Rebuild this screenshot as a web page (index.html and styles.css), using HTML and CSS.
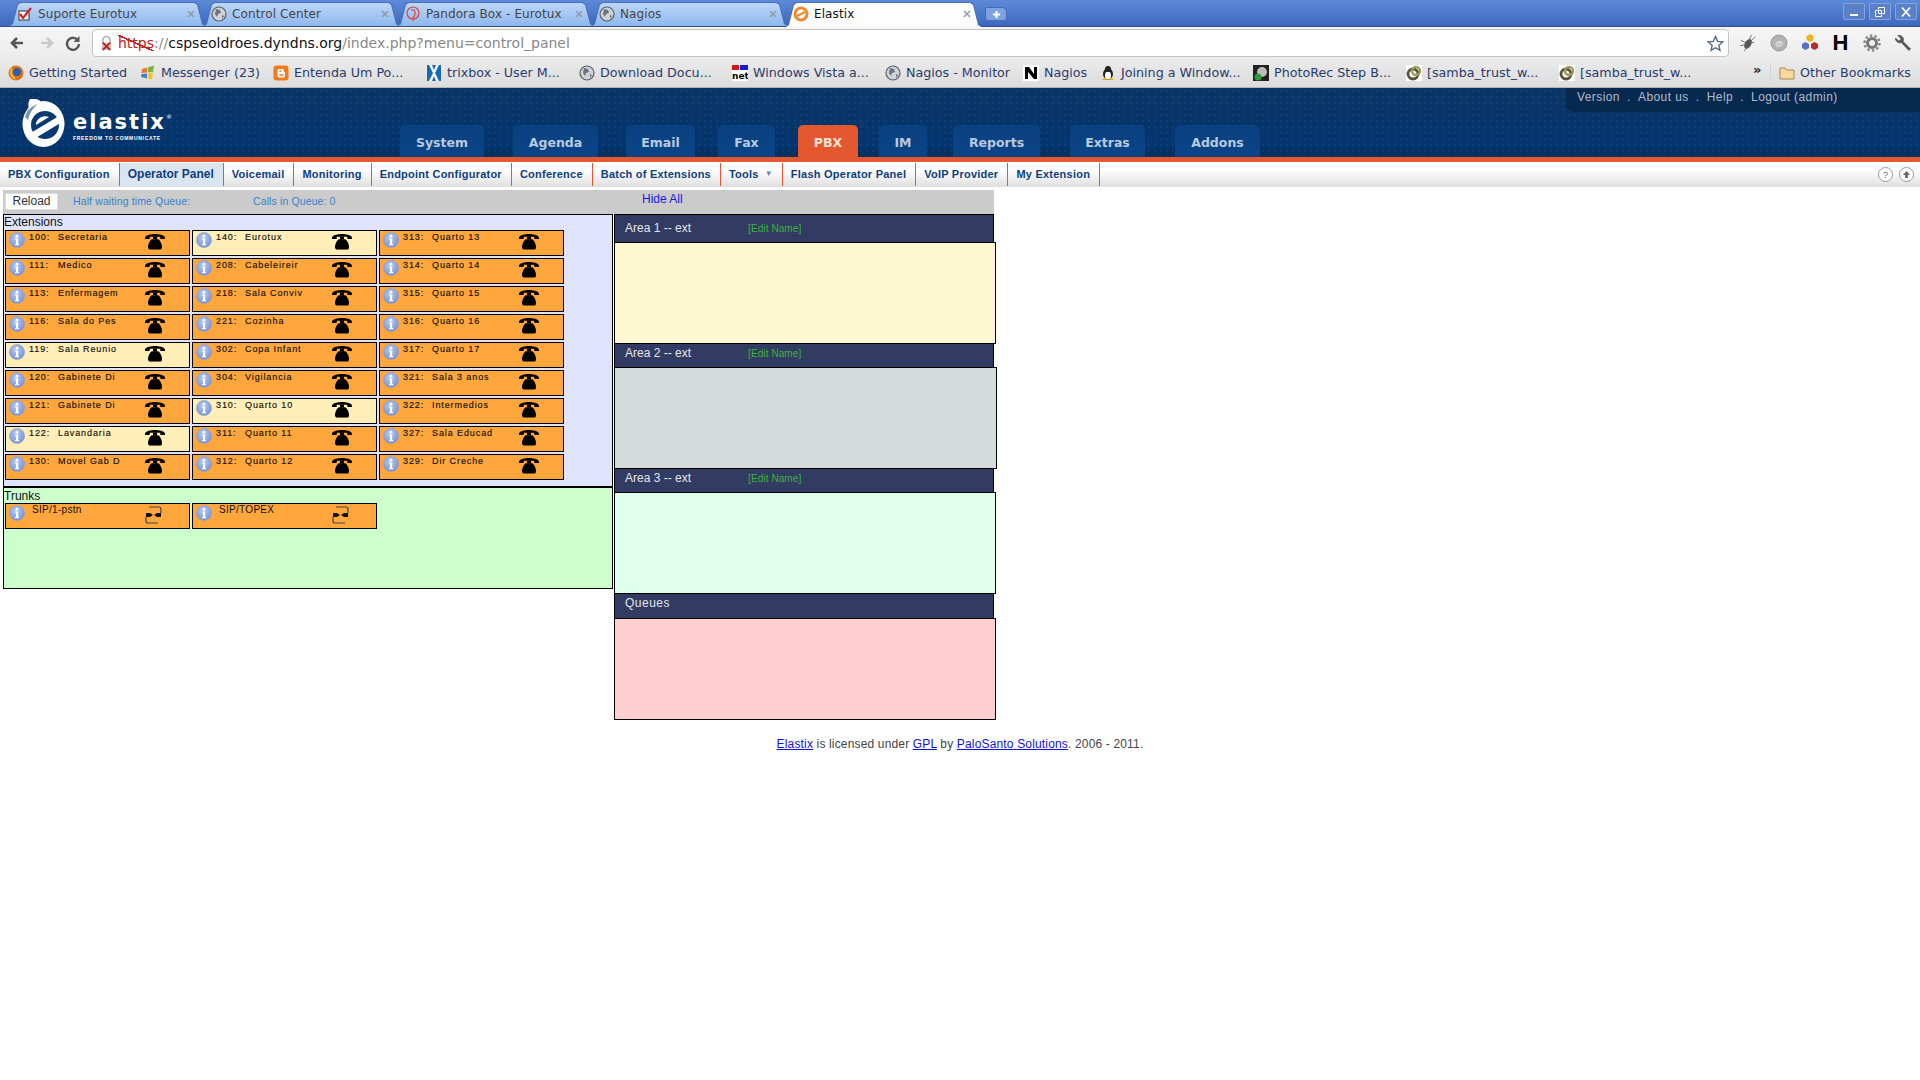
FILE: index.html
```html
<!DOCTYPE html>
<html lang="en">
<head>
    <meta charset="UTF-8">
    <title>Elastix</title>
    <link rel="stylesheet" href="styles.css">
</head>
<body>
    <!-- shared icons -->
    <svg class="sprite" xmlns="http://www.w3.org/2000/svg">
        <defs>
            <radialGradient id="info-fill" cx="45%" cy="35%" r="70%">
                <stop offset="0" stop-color="#b8c9f0"/>
                <stop offset="1" stop-color="#6f8fd6"/>
            </radialGradient>
            <symbol id="i-info" viewBox="0 0 16 16">
                <circle cx="8" cy="8" r="7.6" fill="url(#info-fill)" stroke="#8a9fd0" stroke-width=".6"/>
                <circle cx="8" cy="4.2" r="1.4" fill="#fff"/>
                <path d="M6.2 6.6h3v5.4h1v1.2H6v-1.2h1V7.8h-.8z" fill="#fff"/>
            </symbol>
            <symbol id="i-phone" viewBox="0 0 20 16">
                <path d="M0 3.4C1 1 6 0 10 0s9 1 10 3.400V5h-4.400L15 2.800H5L4.400 5H0z" fill="#000"/>
                <path d="M8 2.500h4v3H8z" fill="#000"/>
                <path d="M6.800 5.200h6.400c2 1.200 3.800 4.800 3.800 8 0 1.600-1 2.200-2.400 2.200H5.400c-1.400 0-2.400-.6-2.400-2.200 0-3.200 1.800-6.800 3.800-8z" fill="#000"/>
                <path d="M4 15.700h13" stroke="#6b5a30" stroke-width=".6"/>
            </symbol>
            <symbol id="i-trunk" viewBox="0 0 17 18">
                <path d="M4 1H14Q16 1 16 3V7M13 17H3Q1 17 1 15V11" fill="none" stroke="#444" stroke-width="1.200"/>
                <path d="M1 7H5L8 9 5 11H1zM16 7H12L9 9 12 11H16z" fill="#111"/>
            </symbol>
            <symbol id="i-globe" viewBox="0 0 16 16">
                <circle cx="8" cy="8" r="7" fill="#cfd3d8" stroke="#5b6068" stroke-width="1.200"/>
                <path d="M5 3l4 1 1 3-3 1-1 3-2-3zM11 9l2 1-2 3z" fill="#6d737c"/>
            </symbol>
            <symbol id="i-samba" viewBox="0 0 16 16">
                <rect width="16" height="16" fill="#fff"/>
                <circle cx="7" cy="9" r="5" fill="none" stroke="#55543a" stroke-width="2.800"/>
                <circle cx="10" cy="6" r="4" fill="none" stroke="#9c9a5c" stroke-width="2.400"/>
            </symbol>
            <symbol id="i-close" viewBox="0 0 10 10">
                <path d="M2 2l6 6M8 2l-6 6" stroke="#8d97a5" stroke-width="1.400"/>
            </symbol>
        </defs>
    </svg>

    <div class="tabstrip">
        <div class="ctab">
            <svg class="fav" viewBox="0 0 16 16"><rect x="2" y="5" width="10" height="9" fill="#fff" stroke="#333"/><path d="M3 8l3 4 8-10" fill="none" stroke="#d4202a" stroke-width="2.200"/></svg>
            <span class="ctab-title">Suporte Eurotux</span>
            <svg class="ctab-x"><use href="#i-close"/></svg>
        </div>
        <div class="ctab">
            <svg class="fav"><use href="#i-globe"/></svg>
            <span class="ctab-title">Control Center</span>
            <svg class="ctab-x"><use href="#i-close"/></svg>
        </div>
        <div class="ctab">
            <svg class="fav" viewBox="0 0 16 16"><circle cx="8" cy="7" r="6" fill="none" stroke="#d8433f" stroke-width="1.200"/><path d="M6 4q4-1 4 3t-2 4v4" fill="none" stroke="#d8433f" stroke-width="1.200"/></svg>
            <span class="ctab-title">Pandora Box - Eurotux</span>
            <svg class="ctab-x"><use href="#i-close"/></svg>
        </div>
        <div class="ctab">
            <svg class="fav"><use href="#i-globe"/></svg>
            <span class="ctab-title">Nagios</span>
            <svg class="ctab-x"><use href="#i-close"/></svg>
        </div>
        <div class="ctab ctab-active">
            <svg class="fav" viewBox="0 0 16 16"><circle cx="8" cy="8" r="6" fill="none" stroke="#ef8a2c" stroke-width="3"/><path d="M4 10l8-4" stroke="#ef8a2c" stroke-width="2"/></svg>
            <span class="ctab-title">Elastix</span>
            <svg class="ctab-x"><use href="#i-close"/></svg>
        </div>
        <div class="newtab">
            <svg viewBox="0 0 10 10"><path d="M5 1v8M1 5h8" stroke="#fff" stroke-width="2.400"/></svg>
        </div>
        <div class="winbtns">
            <div class="winbtn"><svg viewBox="0 0 12 12"><path d="M2 9h8" stroke="#fff" stroke-width="2"/></svg></div>
            <div class="winbtn"><svg viewBox="0 0 12 12"><path d="M4.500 1.500h6v6h-6zM1.500 4.500h6v6h-6z" fill="#5a80c8" stroke="#fff"/></svg></div>
            <div class="winbtn"><svg viewBox="0 0 12 12"><path d="M2 1.500l8 9M10 1.500l-8 9" stroke="#fff" stroke-width="1.800"/></svg></div>
        </div>
    </div>

    <div class="toolbar">
        <div class="navbtn"><svg viewBox="0 0 16 16"><path d="M14 8H5M8 3L3 8l5 5" fill="none" stroke="#555" stroke-width="2.600"/></svg></div>
        <div class="navbtn"><svg viewBox="0 0 16 16"><path d="M2 8h9M8 3l5 5-5 5" fill="none" stroke="#c8c8c8" stroke-width="2.600"/></svg></div>
        <div class="navbtn navbtn-reload"><svg viewBox="0 0 16 16"><path d="M13 5.500A6 6 0 1 0 14 9" fill="none" stroke="#555" stroke-width="2.400"/><path d="M14.500 1v6h-6z" fill="#555"/></svg></div>
        <div class="addressbar">
            <svg class="lock" viewBox="0 0 14 16"><path d="M3 7V4.500a4 4 0 0 1 8 0V7" fill="none" stroke="#aaa" stroke-width="1.600"/><rect x="2" y="7" width="10" height="8" fill="#c4c4c4"/><path d="M3 7l8 8M11 7l-8 8" stroke="#c8201c" stroke-width="2"/></svg>
            <span class="url"><span class="url-https">https</span><span class="url-path">://</span>cspseoldroes.dyndns.org<span class="url-path">/index.php?menu=control_panel</span></span>
            <svg class="star" viewBox="0 0 16 16"><path d="M8 1.500l2 4.500 4.800.5-3.600 3.200 1 4.800L8 12l-4.200 2.500 1-4.800L1.200 6.500 6 6z" fill="#fff" stroke="#54698a" stroke-width="1.300"/></svg>
        </div>
        <div class="extensions">
            <div class="ext-icon"><svg viewBox="0 0 18 20"><ellipse cx="9" cy="11" rx="3.500" ry="6" fill="#555" transform="rotate(30 9 11)"/><path d="M1 7l6 3M0 13l6-1M5 19l3-5M13 1l-3 6M17 3l-5 5M16 9l-4 1" stroke="#666"/></svg></div>
            <div class="ext-icon"><svg viewBox="0 0 18 18"><circle cx="9" cy="9" r="8" fill="#b4b4b4" stroke="#9a9a9a"/><text x="9" y="12" class="ext-at">@</text></svg></div>
            <div class="ext-icon"><svg viewBox="0 0 18 18"><path d="M9 0l3.500 2v4L9 8 5.500 6V2z" fill="#f0b420"/><path d="M4.500 8L8 10v4l-3.500 2L1 14v-4z" fill="#5870c0"/><path d="M13.500 8L17 10v4l-3.500 2L10 14v-4z" fill="#b82a2a"/></svg></div>
            <div class="ext-icon ext-h">H</div>
            <div class="ext-icon"><svg viewBox="0 0 18 18"><circle cx="9" cy="9" r="4.500" fill="none" stroke="#777" stroke-width="3"/><circle cx="9" cy="9" r="7.500" fill="none" stroke="#888" stroke-width="2.400" stroke-dasharray="2.500 2.200"/></svg></div>
            <div class="ext-icon"><svg viewBox="0 0 18 18"><path d="M16.500 15L9 7.500c1-2.500 0-5.500-3.500-6L4 1.500 7 4.500 6.500 6.500 4.500 7 1.500 4c0 3.500 3 5.500 6 4.500l7.200 7.800z" fill="#555" stroke="#555"/></svg></div>
        </div>
    </div>

    <div class="bookmarks">
        <a class="bm bm-1"><svg class="fav" viewBox="0 0 16 16"><circle cx="8" cy="8" r="7.500" fill="#d9731c"/><circle cx="9" cy="7" r="4" fill="#2f5fa8"/><path d="M4 3q-3 7 3 11" fill="none" stroke="#f2b33c" stroke-width="2"/></svg>Getting Started</a>
        <a class="bm bm-2"><svg class="fav" viewBox="0 0 16 16"><path d="M2 4l5-1.500v5L1.500 8z" fill="#e8782c"/><path d="M8 2.300l6-1.800-1 6.500-5 .5z" fill="#7cb342"/><path d="M1.500 9L7 8.500v5L1 12z" fill="#3f7fd0"/><path d="M8 8.500l5-.5-1 6.500-4-.8z" fill="#f2c230"/></svg>Messenger (23)</a>
        <a class="bm bm-3"><svg class="fav" viewBox="0 0 16 16"><rect x=".5" y=".5" width="15" height="15" rx="3" fill="#f27a1a"/><path d="M5 4h4q2 0 2 2v1h1v4q0 1.500-2 1.500H6q-1.500 0-1.500-1.500V5" fill="#fff"/><path d="M6.500 6h2M6.500 10h4" stroke="#f27a1a" stroke-width="1.400"/></svg>Entenda Um Po...</a>
        <a class="bm bm-4"><svg class="fav" viewBox="0 0 16 16"><rect x="1" width="14" height="16" fill="#1868b8"/><path d="M3 0l4 8-4 8h3l2-5 2 5h3L9 8l4-8h-3L8 5 6 0z" fill="#fff"/></svg>trixbox - User M...</a>
        <a class="bm bm-5"><svg class="fav"><use href="#i-globe"/></svg>Download Docu...</a>
        <a class="bm bm-6"><svg class="fav" viewBox="0 0 16 16"><rect width="16" height="16" fill="#fff"/><path d="M0 0h7v5H0z" fill="#d01818"/><path d="M8 0h8v5H8z" fill="#1818d0"/><text x="0" y="14" class="bm-net">net</text></svg>Windows Vista a...</a>
        <a class="bm bm-7"><svg class="fav"><use href="#i-globe"/></svg>Nagios - Monitor</a>
        <a class="bm bm-8"><svg class="fav" viewBox="0 0 16 16"><rect width="16" height="16" fill="#fff"/><path d="M2 2h4l5 7V2h3v12h-3L5 7v7H2z" fill="#000"/></svg>Nagios</a>
        <a class="bm bm-9"><svg class="fav" viewBox="0 0 16 16"><ellipse cx="8" cy="9" rx="5" ry="6" fill="#222"/><ellipse cx="8" cy="10.500" rx="3" ry="4" fill="#fff"/><circle cx="8" cy="4" r="3" fill="#222"/><path d="M2 15h5l-2-3zM14 15H9l2-3z" fill="#e8b020"/></svg>Joining a Window...</a>
        <a class="bm bm-10"><svg class="fav" viewBox="0 0 16 16"><rect width="16" height="16" fill="#222"/><circle cx="9" cy="7" r="5" fill="#bbb"/><circle cx="5" cy="12" r="3.500" fill="#2c9c3c"/></svg>PhotoRec Step B...</a>
        <a class="bm bm-11"><svg class="fav"><use href="#i-samba"/></svg>[samba_trust_w...</a>
        <a class="bm bm-12"><svg class="fav"><use href="#i-samba"/></svg>[samba_trust_w...</a>
        <span class="bm-more">»</span>
        <a class="bm bm-other"><svg class="fav" viewBox="0 0 16 16"><path d="M1 3h5l1.500 2H15v9H1z" fill="#f8d9a0" stroke="#a88850"/></svg>Other Bookmarks</a>
    </div>

    <header class="site-head">
        <div class="logo">
            <svg class="logo-mark" viewBox="0 0 44 48">
                <ellipse cx="21.500" cy="25" rx="21" ry="23" fill="#fff"/>
                <path d="M3 18C6 8 12 3 19 2c-6 5-11 10-13 19z" fill="#0b3a70" opacity=".55"/>
                <circle cx="23" cy="26" r="14" fill="#0b3a70"/>
                <path d="M7 35L37 17l3 6-28 17z" fill="#fff"/>
                <path d="M14 24c2-6 8-8 13-6l-13 8z" fill="#fff"/>
                <path d="M8 0c6-1 10 1 12 4-6 1-10 3-13 7-1-4-1-8 1-11z" fill="#fff"/>
            </svg>
            <div class="logo-text">
                <div class="logo-name">elastix<sup>®</sup></div>
                <div class="logo-tag">FREEDOM TO COMMUNICATE</div>
            </div>
        </div>
        <nav class="mainnav">
            <a class="tab">System</a>
            <a class="tab">Agenda</a>
            <a class="tab">Email</a>
            <a class="tab">Fax</a>
            <a class="tab tab-active">PBX</a>
            <a class="tab">IM</a>
            <a class="tab">Reports</a>
            <a class="tab">Extras</a>
            <a class="tab">Addons</a>
        </nav>
        <div class="usermenu">
            <a>Version</a><span class="dot">.</span><a>About us</a><span class="dot">.</span><a>Help</a><span class="dot">.</span><a>Logout (admin)</a>
        </div>
    </header>

    <nav class="submenu">
        <a class="sub">PBX Configuration</a>
        <a class="sub sub-active">Operator Panel</a>
        <a class="sub">Voicemail</a>
        <a class="sub">Monitoring</a>
        <a class="sub">Endpoint Configurator</a>
        <a class="sub">Conference</a>
        <a class="sub">Batch of Extensions</a>
        <a class="sub">Tools <span class="sub-arrow">▼</span></a>
        <a class="sub">Flash Operator Panel</a>
        <a class="sub">VoIP Provider</a>
        <a class="sub">My Extension</a>
        <div class="sub-tools">
            <span class="round-btn">?</span>
            <span class="round-btn"><svg viewBox="0 0 10 10"><path d="M5 1l4 4.500H6.500V9h-3V5.500H1z" fill="#666"/></svg></span>
        </div>
    </nav>

    <main class="panel">
        <div class="panel-bar">
            <button class="reload">Reload</button>
            <span class="bar-info bar-wait">Half waiting time Queue:</span>
            <span class="bar-info bar-calls">Calls in Queue: 0</span>
            <a class="hide-all">Hide All</a>
        </div>

        <div class="panel-body">
            <div class="panel-left">
                <section class="group group-ext">
                    <div class="group-title">Extensions</div>
                    <div class="btn-grid">
                        <div class="btn"><svg class="ico-info"><use href="#i-info"/></svg><span class="num">100:</span><span class="name">Secretaria</span><svg class="ico-phone"><use href="#i-phone"/></svg></div>
                        <div class="btn btn-free"><svg class="ico-info"><use href="#i-info"/></svg><span class="num">140:</span><span class="name">Eurotux</span><svg class="ico-phone"><use href="#i-phone"/></svg></div>
                        <div class="btn"><svg class="ico-info"><use href="#i-info"/></svg><span class="num">313:</span><span class="name">Quarto 13</span><svg class="ico-phone"><use href="#i-phone"/></svg></div>

                        <div class="btn"><svg class="ico-info"><use href="#i-info"/></svg><span class="num">111:</span><span class="name">Medico</span><svg class="ico-phone"><use href="#i-phone"/></svg></div>
                        <div class="btn"><svg class="ico-info"><use href="#i-info"/></svg><span class="num">208:</span><span class="name">Cabeleireir</span><svg class="ico-phone"><use href="#i-phone"/></svg></div>
                        <div class="btn"><svg class="ico-info"><use href="#i-info"/></svg><span class="num">314:</span><span class="name">Quarto 14</span><svg class="ico-phone"><use href="#i-phone"/></svg></div>

                        <div class="btn"><svg class="ico-info"><use href="#i-info"/></svg><span class="num">113:</span><span class="name">Enfermagem</span><svg class="ico-phone"><use href="#i-phone"/></svg></div>
                        <div class="btn"><svg class="ico-info"><use href="#i-info"/></svg><span class="num">218:</span><span class="name">Sala Conviv</span><svg class="ico-phone"><use href="#i-phone"/></svg></div>
                        <div class="btn"><svg class="ico-info"><use href="#i-info"/></svg><span class="num">315:</span><span class="name">Quarto 15</span><svg class="ico-phone"><use href="#i-phone"/></svg></div>

                        <div class="btn"><svg class="ico-info"><use href="#i-info"/></svg><span class="num">116:</span><span class="name">Sala do Pes</span><svg class="ico-phone"><use href="#i-phone"/></svg></div>
                        <div class="btn"><svg class="ico-info"><use href="#i-info"/></svg><span class="num">221:</span><span class="name">Cozinha</span><svg class="ico-phone"><use href="#i-phone"/></svg></div>
                        <div class="btn"><svg class="ico-info"><use href="#i-info"/></svg><span class="num">316:</span><span class="name">Quarto 16</span><svg class="ico-phone"><use href="#i-phone"/></svg></div>

                        <div class="btn btn-free"><svg class="ico-info"><use href="#i-info"/></svg><span class="num">119:</span><span class="name">Sala Reunio</span><svg class="ico-phone"><use href="#i-phone"/></svg></div>
                        <div class="btn"><svg class="ico-info"><use href="#i-info"/></svg><span class="num">302:</span><span class="name">Copa Infant</span><svg class="ico-phone"><use href="#i-phone"/></svg></div>
                        <div class="btn"><svg class="ico-info"><use href="#i-info"/></svg><span class="num">317:</span><span class="name">Quarto 17</span><svg class="ico-phone"><use href="#i-phone"/></svg></div>

                        <div class="btn"><svg class="ico-info"><use href="#i-info"/></svg><span class="num">120:</span><span class="name">Gabinete Di</span><svg class="ico-phone"><use href="#i-phone"/></svg></div>
                        <div class="btn"><svg class="ico-info"><use href="#i-info"/></svg><span class="num">304:</span><span class="name">Vigilancia</span><svg class="ico-phone"><use href="#i-phone"/></svg></div>
                        <div class="btn"><svg class="ico-info"><use href="#i-info"/></svg><span class="num">321:</span><span class="name">Sala 3 anos</span><svg class="ico-phone"><use href="#i-phone"/></svg></div>

                        <div class="btn"><svg class="ico-info"><use href="#i-info"/></svg><span class="num">121:</span><span class="name">Gabinete Di</span><svg class="ico-phone"><use href="#i-phone"/></svg></div>
                        <div class="btn btn-free"><svg class="ico-info"><use href="#i-info"/></svg><span class="num">310:</span><span class="name">Quarto 10</span><svg class="ico-phone"><use href="#i-phone"/></svg></div>
                        <div class="btn"><svg class="ico-info"><use href="#i-info"/></svg><span class="num">322:</span><span class="name">Intermedios</span><svg class="ico-phone"><use href="#i-phone"/></svg></div>

                        <div class="btn btn-free"><svg class="ico-info"><use href="#i-info"/></svg><span class="num">122:</span><span class="name">Lavandaria</span><svg class="ico-phone"><use href="#i-phone"/></svg></div>
                        <div class="btn"><svg class="ico-info"><use href="#i-info"/></svg><span class="num">311:</span><span class="name">Quarto 11</span><svg class="ico-phone"><use href="#i-phone"/></svg></div>
                        <div class="btn"><svg class="ico-info"><use href="#i-info"/></svg><span class="num">327:</span><span class="name">Sala Educad</span><svg class="ico-phone"><use href="#i-phone"/></svg></div>

                        <div class="btn"><svg class="ico-info"><use href="#i-info"/></svg><span class="num">130:</span><span class="name">Movel Gab D</span><svg class="ico-phone"><use href="#i-phone"/></svg></div>
                        <div class="btn"><svg class="ico-info"><use href="#i-info"/></svg><span class="num">312:</span><span class="name">Quarto 12</span><svg class="ico-phone"><use href="#i-phone"/></svg></div>
                        <div class="btn"><svg class="ico-info"><use href="#i-info"/></svg><span class="num">329:</span><span class="name">Dir Creche</span><svg class="ico-phone"><use href="#i-phone"/></svg></div>
                    </div>
                </section>
                <section class="group group-trunks">
                    <div class="group-title group-title-trunks">Trunks</div>
                    <div class="btn-grid">
                        <div class="btn"><svg class="ico-info"><use href="#i-info"/></svg><span class="trunk-name">SIP/1-pstn</span><svg class="ico-trunk"><use href="#i-trunk"/></svg></div>
                        <div class="btn"><svg class="ico-info"><use href="#i-info"/></svg><span class="trunk-name">SIP/TOPEX</span><svg class="ico-trunk"><use href="#i-trunk"/></svg></div>
                    </div>
                </section>
            </div>

            <div class="panel-right">
                <div class="area-head area-head-first"><span class="area-name">Area 1 -- ext</span><a class="edit-name">[Edit Name]</a></div>
                <div class="area-box area-1"></div>
                <div class="area-head"><span class="area-name">Area 2 -- ext</span><a class="edit-name">[Edit Name]</a></div>
                <div class="area-box area-2"></div>
                <div class="area-head"><span class="area-name">Area 3 -- ext</span><a class="edit-name">[Edit Name]</a></div>
                <div class="area-box area-3"></div>
                <div class="area-head area-head-queues"><span class="area-name">Queues</span></div>
                <div class="area-box area-queues"></div>
            </div>
        </div>
    </main>

    <footer class="site-foot">
        <a href="#">Elastix</a> is licensed under <a href="#">GPL</a> by <a href="#">PaloSanto Solutions</a>. 2006 - 2011.
    </footer>
</body>
</html>
```

FILE: styles.css
```css
body {
    font-family: "Liberation Sans", Arial, sans-serif;
    margin: 0;
    padding: 0;
    background-color: white;
    overflow: hidden;
}
a {
    cursor: pointer;
}
.sprite {
    position: absolute;
    width: 0;
    height: 0;
}
.fav {
    width: 16px;
    height: 16px;
    flex: none;
}

/* browser tabs */
.tabstrip {
    display: flex;
    align-items: flex-end;
    height: 26px;
    padding-left: 9px;
    background: linear-gradient(#5d8ad8, #3d68bd);
    border-bottom: 1px solid #2f4f90;
    box-sizing: content-box;
}
.ctab {
    position: relative;
    display: flex;
    align-items: center;
    width: 197px;
    height: 24px;
    margin-right: -3px;
    padding: 0 10px 0 8px;
    box-sizing: border-box;
    font-family: "DejaVu Sans", sans-serif;
    font-size: 12px;
    letter-spacing: .1px;
    color: #444;
    background-color: #4a72b8;
    clip-path: polygon(0 100%, 3px 92%, 8px 8%, 11px 0, calc(100% - 11px) 0, calc(100% - 8px) 8%, calc(100% - 3px) 92%, 100% 100%);
}
.ctab::before {
    content: "";
    position: absolute;
    inset: 1px 1px 0 1px;
    background: linear-gradient(#bcd6f8, #8fb8ee);
    clip-path: polygon(0 100%, 3px 92%, 8px 8%, 11px 0, calc(100% - 11px) 0, calc(100% - 8px) 8%, calc(100% - 3px) 92%, 100% 100%);
}
.ctab > * {
    position: relative;
}
.ctab-title {
    flex: 1;
    margin-left: 5px;
    white-space: nowrap;
    overflow: hidden;
}
.ctab-x {
    width: 10px;
    height: 10px;
    flex: none;
}
.ctab-active {
    z-index: 2;
    height: 25px;
    margin-bottom: -1px;
    padding-bottom: 1px;
    color: #111;
    background-color: #4a72b8;
}
.ctab-active::before {
    background: linear-gradient(#fff, #fcfcfc);
}
.newtab {
    display: flex;
    align-items: center;
    justify-content: center;
    width: 22px;
    height: 14px;
    margin: 0 0 5px 6px;
    background-color: #7ea2e0;
    border: 1px solid #4a6cb0;
    border-radius: 2px 5px 3px 3px;
    box-sizing: border-box;
}
.newtab svg {
    width: 9px;
    height: 9px;
}
.winbtns {
    display: flex;
    gap: 4px;
    margin-left: auto;
    margin-right: 3px;
    align-self: flex-start;
    padding-top: 3px;
}
.winbtn {
    display: flex;
    align-items: center;
    justify-content: center;
    width: 22px;
    height: 17px;
    box-sizing: border-box;
    background-color: #5a80c8;
    border: 1px solid #86a4dc;
    border-radius: 2px;
}
.winbtn svg {
    width: 12px;
    height: 12px;
}

/* browser toolbar */
.toolbar {
    display: flex;
    align-items: flex-start;
    height: 30px;
    padding-left: 2px;
    background: linear-gradient(#f6f6f6, #ececec);
}
.navbtn {
    display: flex;
    justify-content: center;
    width: 30px;
    padding-top: 8px;
}
.navbtn svg {
    width: 16px;
    height: 16px;
}
.navbtn-reload {
    width: 22px;
    margin-right: 8px;
}
.addressbar {
    display: flex;
    align-items: center;
    flex: 1;
    height: 28px;
    margin-top: 2px;
    padding: 0 4px 0 7px;
    box-sizing: border-box;
    background-color: white;
    border: 1px solid #c4c4c4;
    border-radius: 4px;
}
.lock {
    width: 13px;
    height: 15px;
    flex: none;
}
.url {
    margin-left: 5px;
    font-family: "DejaVu Sans", sans-serif;
    font-size: 14px;
    color: #111;
    white-space: nowrap;
}
.url-https {
    color: #c8201c;
    background: linear-gradient(to top right, transparent 47%, #c8201c 47%, #c8201c 52%, transparent 52%);
}
.url-path {
    color: #888;
}
.star {
    width: 17px;
    height: 17px;
    margin-left: auto;
}
.extensions {
    display: flex;
    width: 188px;
    padding-left: 3px;
}
.ext-icon {
    display: flex;
    align-items: center;
    justify-content: center;
    width: 31px;
    height: 20px;
    margin-top: 6px;
}
.ext-icon svg {
    width: 18px;
    height: 18px;
}
.ext-at {
    font-size: 8px;
    fill: #eee;
    text-anchor: middle;
}
.ext-h {
    font-size: 22px;
    font-weight: bold;
    color: #000;
}

/* bookmarks bar */
.bookmarks {
    display: flex;
    align-items: center;
    height: 30px;
    padding-left: 8px;
    background: linear-gradient(#ececec, #dcdcdc);
    border-bottom: 1px solid #b4b4b4;
    font-family: "DejaVu Sans", sans-serif;
    font-size: 12.700px;
    color: #2a3c6c;
}
.bm {
    display: flex;
    align-items: center;
    gap: 5px;
    padding-top: 1px;
    white-space: nowrap;
}
.bm-1 { width: 132px; }
.bm-2 { width: 133px; }
.bm-3 { width: 153px; }
.bm-4 { width: 153px; }
.bm-5 { width: 153px; }
.bm-6 { width: 153px; }
.bm-7 { width: 138px; }
.bm-8 { width: 77px; }
.bm-9 { width: 153px; }
.bm-10 { width: 153px; }
.bm-11 { width: 153px; }
.bm-12 { width: 194px; }
.bm-more {
    width: 17px;
    margin-top: -6px;
    font-size: 13px;
    font-weight: bold;
    color: #222;
}
.bm-other {
    padding-left: 8px;
    border-left: 1px solid #cfd3da;
}
.bm-net {
    font-size: 9px;
    font-weight: bold;
    fill: #000;
}

/* elastix header */
.site-head {
    position: relative;
    display: flex;
    height: 69px;
    background-color: #08386e;
    background-image:
        radial-gradient(circle, rgba(70, 120, 180, 0.14) 1px, transparent 1.400px),
        linear-gradient(#0a3565, #04356f 85%, #053160 92%);
    background-size: 6px 6px, 100% 100%;
}
.logo {
    display: flex;
    padding: 11px 0 0 22px;
    width: 380px;
    box-sizing: border-box;
}
.logo-mark {
    width: 44px;
    height: 48px;
}
.logo-text {
    margin-left: 7px;
    padding-top: 6px;
    color: white;
}
.logo-name {
    font-family: "DejaVu Sans", sans-serif;
    font-size: 21px;
    font-weight: bold;
    line-height: 23px;
    letter-spacing: 2px;
}
.logo-name sup {
    font-size: 6px;
    font-weight: normal;
    vertical-align: 10px;
    letter-spacing: 0;
}
.logo-tag {
    margin-top: 1px;
    font-size: 5px;
    font-weight: bold;
    line-height: 6px;
    letter-spacing: .7px;
    white-space: nowrap;
}
.mainnav {
    display: flex;
    align-items: flex-end;
    padding-left: 20px;
}
.tab {
    display: block;
    height: 32px;
    line-height: 35px;
    box-sizing: border-box;
    text-align: center;
    font-family: "DejaVu Sans", sans-serif;
    font-size: 12.500px;
    font-weight: bold;
    color: #b8cade;
    background: linear-gradient(#0a4080, #0a4488);
    border-radius: 5px 5px 0 0;
}
.tab-active {
    color: #ffe3d6;
    background: #e4582f;
}
.tab:nth-child(1) { width: 84px; }
.tab:nth-child(2) { width: 85px; margin-left: 29px; }
.tab:nth-child(3) { width: 69px; margin-left: 28px; }
.tab:nth-child(4) { width: 57px; margin-left: 23px; }
.tab:nth-child(5) { width: 60px; margin-left: 23px; }
.tab:nth-child(6) { width: 48px; margin-left: 21px; }
.tab:nth-child(7) { width: 87px; margin-left: 26px; }
.tab:nth-child(8) { width: 75px; margin-left: 30px; }
.tab:nth-child(9) { width: 85px; margin-left: 30px; }
.usermenu {
    position: absolute;
    top: 0;
    right: 0;
    width: 354px;
    height: 24px;
    padding-left: 11px;
    box-sizing: border-box;
    background-color: #07294f;
    border-bottom-left-radius: 8px;
    font-size: 12px;
    line-height: 19px;
    letter-spacing: .42px;
    color: #aebccc;
    white-space: nowrap;
}
.dot {
    display: inline-block;
    width: 18px;
    text-align: center;
}

/* elastix submenu */
.submenu {
    display: flex;
    height: 25px;
    border-top: 5px solid #e5582f;
    background: linear-gradient(#fff, #fff 30%, #dfdfdf);
    font-size: 11px;
    font-weight: bold;
    letter-spacing: .235px;
    color: #0d3f7c;
}
.sub {
    display: flex;
    align-items: center;
    height: 23px;
    margin-top: 1px;
    padding: 0 9px 2px 8px;
    box-sizing: border-box;
    border-right: 1px solid #e5582f;
    white-space: nowrap;
}
.sub-active {
    background-color: #dae5f2;
    font-size: 12px;
    letter-spacing: 0;
}
.sub-arrow {
    margin-left: 6px;
    font-size: 8px;
    color: #6a87ab;
}
.sub-tools {
    display: flex;
    align-items: center;
    gap: 6px;
    margin-left: auto;
    margin-right: 6px;
}
.round-btn {
    display: flex;
    align-items: center;
    justify-content: center;
    width: 15px;
    height: 15px;
    box-sizing: border-box;
    background-color: white;
    border: 1px solid #999;
    border-radius: 50%;
    font-size: 9px;
    font-weight: normal;
    color: #666;
}
.round-btn svg {
    width: 9px;
    height: 9px;
}

/* operator panel */
.panel {
    width: 994px;
    margin: 3px 0 0 3px;
}
.panel-bar {
    display: flex;
    align-items: center;
    height: 24px;
    padding-bottom: 2px;
    box-sizing: border-box;
    width: 991px;
    background-color: #cbcbcb;
    font-size: 10.500px;
}
.reload {
    width: 53px;
    height: 17px;
    margin-left: 2px;
    padding: 0;
    background-color: white;
    border: 1px solid #ddd;
    font-family: "Liberation Sans", Arial, sans-serif;
    font-size: 12px;
    color: #333;
}
.bar-info {
    color: #3a7fc8;
    letter-spacing: .12px;
    white-space: nowrap;
}
.bar-wait {
    width: 180px;
    margin-left: 15px;
}
.bar-calls {
    width: 389px;
}
.hide-all {
    font-size: 12px;
    color: #1818e0;
    margin-top: -5px;
}
.panel-body {
    display: flex;
}
.panel-left {
    width: 610px;
    margin-right: 1px;
}
.group {
    box-sizing: border-box;
    border: 1px solid black;
}
.group-ext {
    height: 274px;
    background-color: #dfe3fb;
    border-bottom-width: 2px;
}
.group-trunks {
    height: 101px;
    margin-top: 0;
    background-color: #ccffcc;
    border-top: none;
}
.group-title {
    height: 15px;
    padding-top: 1px;
    box-sizing: border-box;
    font-size: 12px;
    line-height: 13px;
    color: #111;
}
.group-title-trunks {
    padding-top: 2px;
}
.btn-grid {
    display: grid;
    grid-template-columns: repeat(3, 185px);
    column-gap: 2px;
    row-gap: 2px;
    padding-left: 1px;
}
.btn {
    display: flex;
    align-items: flex-start;
    height: 26px;
    box-sizing: border-box;
    background-color: #ffa73c;
    border: 1px solid black;
    font-size: 9px;
    line-height: 12px;
    letter-spacing: .9px;
    -webkit-text-stroke: .15px #111;
    color: #111;
}
.btn-free {
    background-color: #ffeeb7;
}
.ico-info {
    width: 16px;
    height: 16px;
    margin: 1px 4px 0 3px;
    flex: none;
}
.num {
    width: 29px;
    flex: none;
}
.name,
.trunk-name {
    white-space: nowrap;
}
.trunk-name {
    margin-left: 3px;
    font-size: 10px;
    letter-spacing: .3px;
    -webkit-text-stroke: 0;
}
.ico-phone {
    width: 20px;
    height: 16px;
    margin: 3px 24px 0 auto;
    flex: none;
}
.ico-trunk {
    width: 17px;
    height: 18px;
    margin: 2px 27px 0 auto;
    flex: none;
}

/* areas */
.panel-right {
    width: 383px;
}
.area-head {
    display: flex;
    width: 380px;
    height: 23px;
    padding: 2px 0 0 10px;
    box-sizing: border-box;
    background-color: #323b61;
    border-right: 1px solid black;
    border-left: 1px solid black;
    font-size: 12px;
    line-height: 14px;
    color: #e4e6ee;
}
.area-head-first {
    height: 28px;
    padding-top: 6px;
    border-top: 1px solid black;
}
.area-head-queues {
    height: 24px;
    padding-top: 2px;
    letter-spacing: .5px;
}
.area-name {
    width: 123px;
    flex: none;
    white-space: nowrap;
}
.edit-name {
    margin-top: 1px;
    font-size: 10px;
    letter-spacing: .1px;
    color: #3cb43c;
    white-space: nowrap;
}
.area-box {
    box-sizing: border-box;
    width: 382px;
    height: 102px;
    border: 1px solid black;
}
.area-1 { background-color: #fdf7d2; }
.area-2 { background-color: #d3dcdb; width: 383px; }
.area-3 { background-color: #e0ffec; }
.area-queues { background-color: #ffcece; }

.site-foot {
    margin-top: 17px;
    text-align: center;
    font-size: 12px;
    line-height: 14px;
    letter-spacing: .16px;
    color: #444;
}
.site-foot a {
    color: #1212e0;
}
```
